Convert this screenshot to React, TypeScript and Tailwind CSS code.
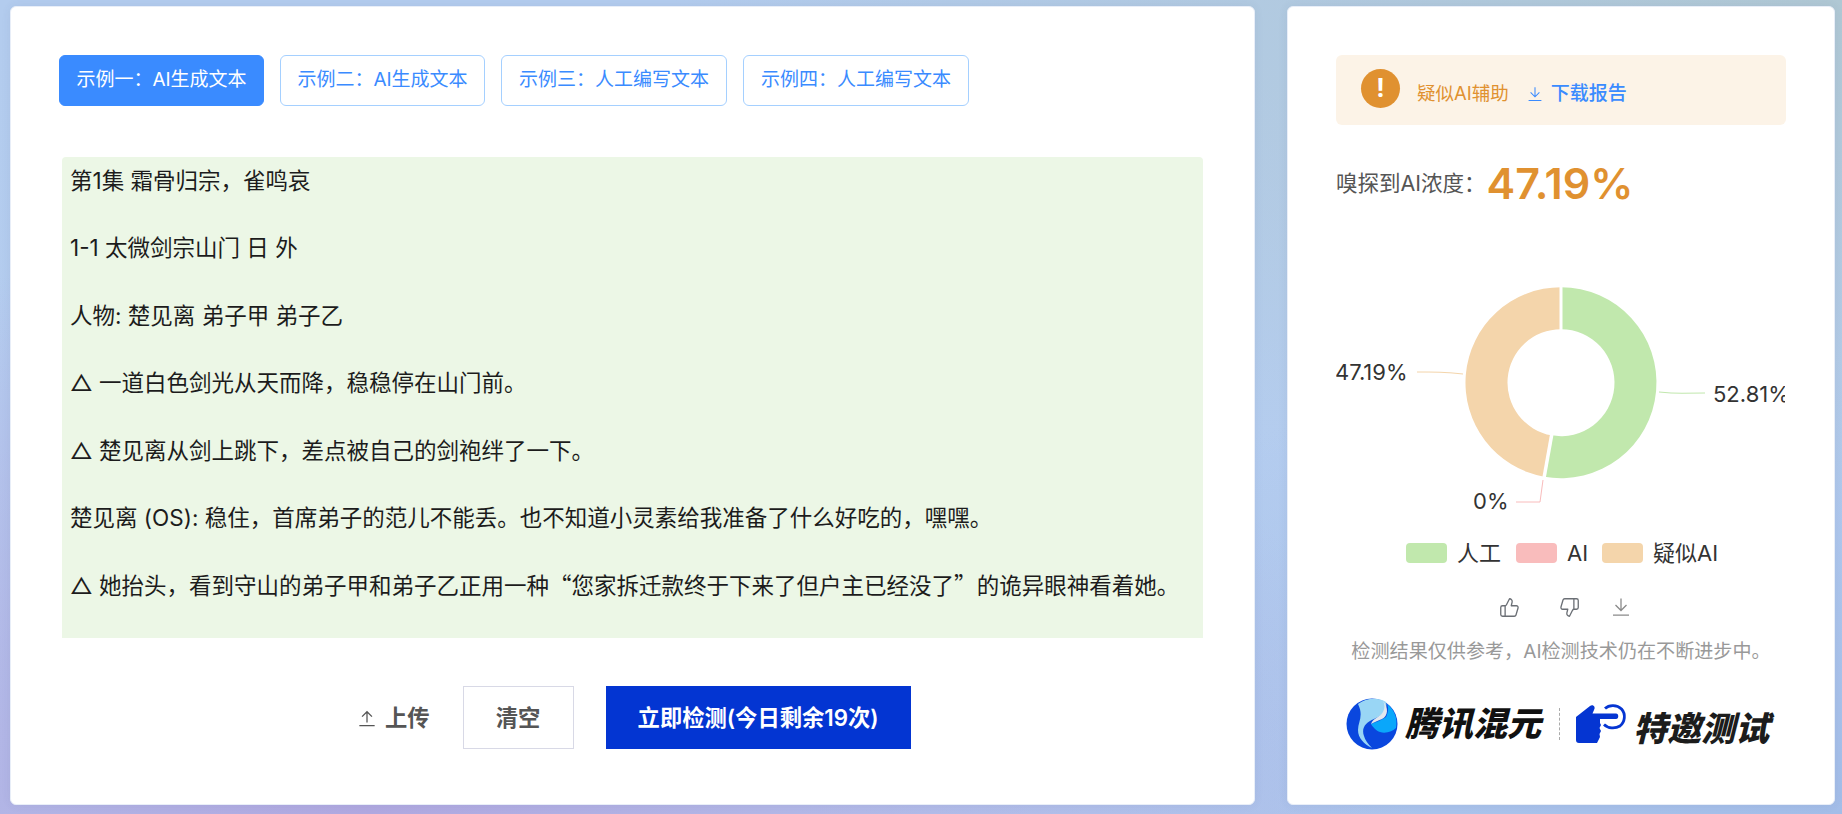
import { ThumbsDown, ThumbsUp } from "lucide-react";

const FONT = "font-['Inter','Noto_Sans_CJK_SC',sans-serif]";

const tabs = [
  { label: "示例一：AI生成文本", width: "w-[205px]", active: true },
  { label: "示例二：AI生成文本", width: "w-[205px]", active: false },
  { label: "示例三：人工编写文本", width: "w-[226px]", active: false },
  { label: "示例四：人工编写文本", width: "w-[226px]", active: false },
];

const lines = [
  "第1集 霜骨归宗，雀鸣哀",
  "",
  "1-1 太微剑宗山门 日 外",
  "",
  "人物: 楚见离 弟子甲 弟子乙",
  "",
  "△ 一道白色剑光从天而降，稳稳停在山门前。",
  "",
  "△ 楚见离从剑上跳下，差点被自己的剑袍绊了一下。",
  "",
  "楚见离 (OS): 稳住，首席弟子的范儿不能丢。也不知道小灵素给我准备了什么好吃的，嘿嘿。",
  "",
];

function DownloadGlyph({ className }: { className: string }) {
  return (
    <svg viewBox="0 0 20 20" fill="none" stroke="currentColor" strokeWidth="1.3" className={className}>
      <path d="M10 1.5V13M4.5 8l5.5 5.5L15.5 8M2 18.2h16" />
    </svg>
  );
}

function UploadGlyph({ className }: { className: string }) {
  return (
    <svg viewBox="0 0 20 20" fill="none" stroke="currentColor" strokeWidth="1.4" className={className}>
      <path d="M10 15V3M4.5 8.5L10 3l5.5 5.5M1.5 18.5h17" />
    </svg>
  );
}

function Donut() {
  const cx = 225;
  const cy = 171.7;
  const R = 95.5;
  const r = 53.5;
  const pt = (rad: number, deg: number) => {
    const a = ((deg - 90) * Math.PI) / 180;
    return `${(cx + rad * Math.cos(a)).toFixed(2)} ${(cy + rad * Math.sin(a)).toFixed(2)}`;
  };
  const sector = (a: number, b: number) =>
    `M${pt(R, a)}A${R} ${R} 0 ${b - a > 180 ? 1 : 0} 1 ${pt(R, b)}L${pt(r, b)}A${r} ${r} 0 ${b - a > 180 ? 1 : 0} 0 ${pt(r, a)}Z`;
  const split = 0.5281 * 360;
  return (
    <svg viewBox="0 0 449 331" className="block h-[331px] w-[449px]">
      <path d={sector(0, split)} fill="#c1e8ad" />
      <path d={sector(split, 360)} fill="#f4d5ab" />
      <path d={`M${pt(r - 1, 0)}L${pt(R + 1, 0)}`} stroke="#fff" strokeWidth="3" />
      <path d={`M${pt(r - 1, split)}L${pt(R + 1, split)}`} stroke="#fff" strokeWidth="3.5" />
      <path d="M323 181C340 183 352 182 369 182" fill="none" stroke="#c1e8ad" strokeWidth="1" />
      <path d="M127 163C110 161 98 161 81 161" fill="none" stroke="#f4d5ab" strokeWidth="1" />
      <path d="M207 269L204 291H180" fill="none" stroke="#f9bcbc" strokeWidth="1" />
      <g fill="#333" fontSize="22" fontFamily="Inter, 'Noto Sans CJK SC', sans-serif">
        <text x="377" y="191">52.81%</text>
        <text x="-1" y="169">47.19%</text>
        <text x="137" y="298">0%</text>
      </g>
    </svg>
  );
}

function HunyuanLogo() {
  return (
    <svg viewBox="0 0 52 52" className="h-[52px] w-[52px] shrink-0">
      <circle cx="26" cy="26" r="25.5" fill="#0a47de" />
      <path d="M12 6C20 0 32-1 40 4C42 12 36 18 28 21C20 24 15 30 18 38C19 42 22 46 26 50C18 46 12 40 12 32C12 24 18 18 12 6Z" fill="#99d6f5" />
      <path d="M25 26C30 24 36 22 40 19C42 15 43 10 41 6C48 11 52 20 50 30C47 33 40 36 34 34C30 33 27 29 25 26Z" fill="#0aa7fb" />
      <path d="M37 3C43 10 42 18 36 21C32 23 28 24 25 26C27 20 34 19 37 14C39 10 39 6 37 3Z" fill="#e3e8ee" />
    </svg>
  );
}

function HandLogo() {
  return (
    <svg viewBox="8 9 52 40" className="h-[40px] w-[52px] shrink-0">
      <path
        d="M8 22L22 11C25 9 28 12 26 15L24.500 18.500H48C51 18.500 51 24 48 24H32V28L33 30L31.500 33L33 36L31.500 39L32 42L29 48H11C9 48 8 47 8 45Z"
        fill="#0535d2"
      />
      <path d="M37 13.500C41 9.500 49 9.500 53.500 14C58 19 57 27 52 31C47 34 40 33.500 36 29.500" fill="none" stroke="#0535d2" strokeWidth="2.800" />
    </svg>
  );
}

export default function App() {
  return (
    <div
      className={`${FONT} flex h-[814px] w-[1842px] gap-[32px] overflow-hidden pl-[10px] pt-[6px] bg-[radial-gradient(ellipse_at_100%_0%,#b0c8d4_0%,transparent_45%),radial-gradient(ellipse_at_20%_100%,#b0a8e0_0%,transparent_50%),radial-gradient(ellipse_at_100%_100%,#a3bde8_0%,transparent_40%),linear-gradient(#b3ccee,#b5cdf0)]`}
    >
      <main className="flex h-[799px] w-[1245px] shrink-0 flex-col rounded-[6px] border border-[#e8eef8] bg-white shadow-[0_0_10px_rgba(60,80,110,0.08)]">
        <div className="ml-[48px] mt-[48px] flex gap-[16px]">
          {tabs.map((t) => (
            <button
              key={t.label}
              className={`${t.width} h-[51px] rounded-[6px] border text-[19px] ${
                t.active ? "border-[#3a8bff] bg-[#3a8bff] text-white" : "border-[#a5d0ff] bg-white text-[#3a8bff]"
              }`}
            >
              {t.label}
            </button>
          ))}
        </div>
        <div className="ml-[51px] mt-[51px] h-[481px] w-[1141px] overflow-hidden rounded-t-[4px] bg-[#ecf7e6] px-[8px] pt-[7px] text-[22.500px] leading-[33.7px] text-[#1c1c1c]">
          {lines.map((l, i) => (
            <p key={i} className="h-[33.7px] whitespace-pre">
              {l}
            </p>
          ))}
          <p className="h-[33.7px] whitespace-pre">
            △ 她抬头，看到守山的弟子甲和弟子乙正用一种
            <span className="font-['Noto_Sans_CJK_SC']">“</span>
            您家拆迁款终于下来了但户主已经没了
            <span className="font-['Noto_Sans_CJK_SC']">”</span>
            的诡异眼神看着她。
          </p>
        </div>
        <div className="ml-[347px] mt-[48px] flex h-[63px] items-center text-[22.300px] font-semibold text-[#555]">
          <UploadGlyph className="h-[18px] w-[18px]" />
          <span className="ml-[9px]">上传</span>
          <button className="ml-[33px] h-[63px] w-[111px] border border-[#d8d9e6] bg-white">清空</button>
          <button className="ml-[32px] h-[63px] w-[305px] bg-[#0335d2] text-white">立即检测(今日剩余19次)</button>
        </div>
      </main>

      <aside className="flex h-[799px] w-[548px] shrink-0 flex-col rounded-[6px] border border-[#e8eef8] bg-white px-[48px] shadow-[0_0_10px_rgba(60,80,110,0.08)]">
        <div className="mt-[48px] flex h-[70px] items-center rounded-[6px] bg-[#fcf3e7] pl-[25px]">
          <div className="flex h-[39px] w-[39px] -translate-y-[2px] items-center justify-center rounded-full bg-[#e09130] text-[25px] font-bold leading-none text-white">
            !
          </div>
          <span className="ml-[17px] translate-y-[4px] text-[18.500px] text-[#e09130]">疑似AI辅助</span>
          <DownloadGlyph className="ml-[18px] h-[16px] w-[16px] translate-y-[4px] text-[#3a8bff]" />
          <span className="ml-[8px] translate-y-[4px] text-[19px] font-medium text-[#3a8bff]">下载报告</span>
        </div>
        <div className="mt-[30px] flex h-[56px] items-center">
          <span className="text-[21.500px] text-[#555]">嗅探到AI浓度：</span>
          <span className="ml-[1px] text-[43px] font-semibold text-[#e09130]">47.19%</span>
        </div>
        <div className="h-[331px] w-[449px] overflow-hidden">
          <Donut />
        </div>
        <div className="flex h-[22px] items-center pl-[70px] text-[22px] leading-none text-[#333]">
          <i className="h-[20px] w-[41px] rounded-[4px] bg-[#c1e8ad]" />
          <span className="ml-[10px]">人工</span>
          <i className="ml-[15px] h-[20px] w-[41px] rounded-[4px] bg-[#f9bcbc]" />
          <span className="ml-[10px]">AI</span>
          <i className="ml-[14px] h-[20px] w-[41px] rounded-[4px] bg-[#f4d5ab]" />
          <span className="ml-[10px]">疑似AI</span>
        </div>
        <div className="mt-[32px] flex h-[22px] items-center pl-[163px] text-[#6b6f75]">
          <ThumbsUp className="h-[21px] w-[21px]" strokeWidth={1.5} />
          <ThumbsDown className="ml-[39px] h-[21px] w-[21px]" strokeWidth={1.5} />
          <DownloadGlyph className="ml-[31px] h-[20px] w-[20px] text-[#8a8a8a]" />
        </div>
        <p className="mt-[19px] text-center text-[19.100px] leading-[28px] text-[#999]">
          检测结果仅供参考，AI检测技术仍在不断进步中。
        </p>
        <div className="ml-[10px] mt-[33px] flex h-[52px] items-center">
          <HunyuanLogo />
          <span className="ml-[7px] text-[34px] font-black italic leading-none text-[#111]">腾讯混元</span>
          <span className="ml-[18px] h-[32px] border-l border-dashed border-[#aaa]" />
          <span className="ml-[16px]">
            <HandLogo />
          </span>
          <span className="ml-[5px] translate-y-[5px] text-[34px] font-black italic leading-none text-[#1c1c1c]">特邀测试</span>
        </div>
      </aside>
    </div>
  );
}
